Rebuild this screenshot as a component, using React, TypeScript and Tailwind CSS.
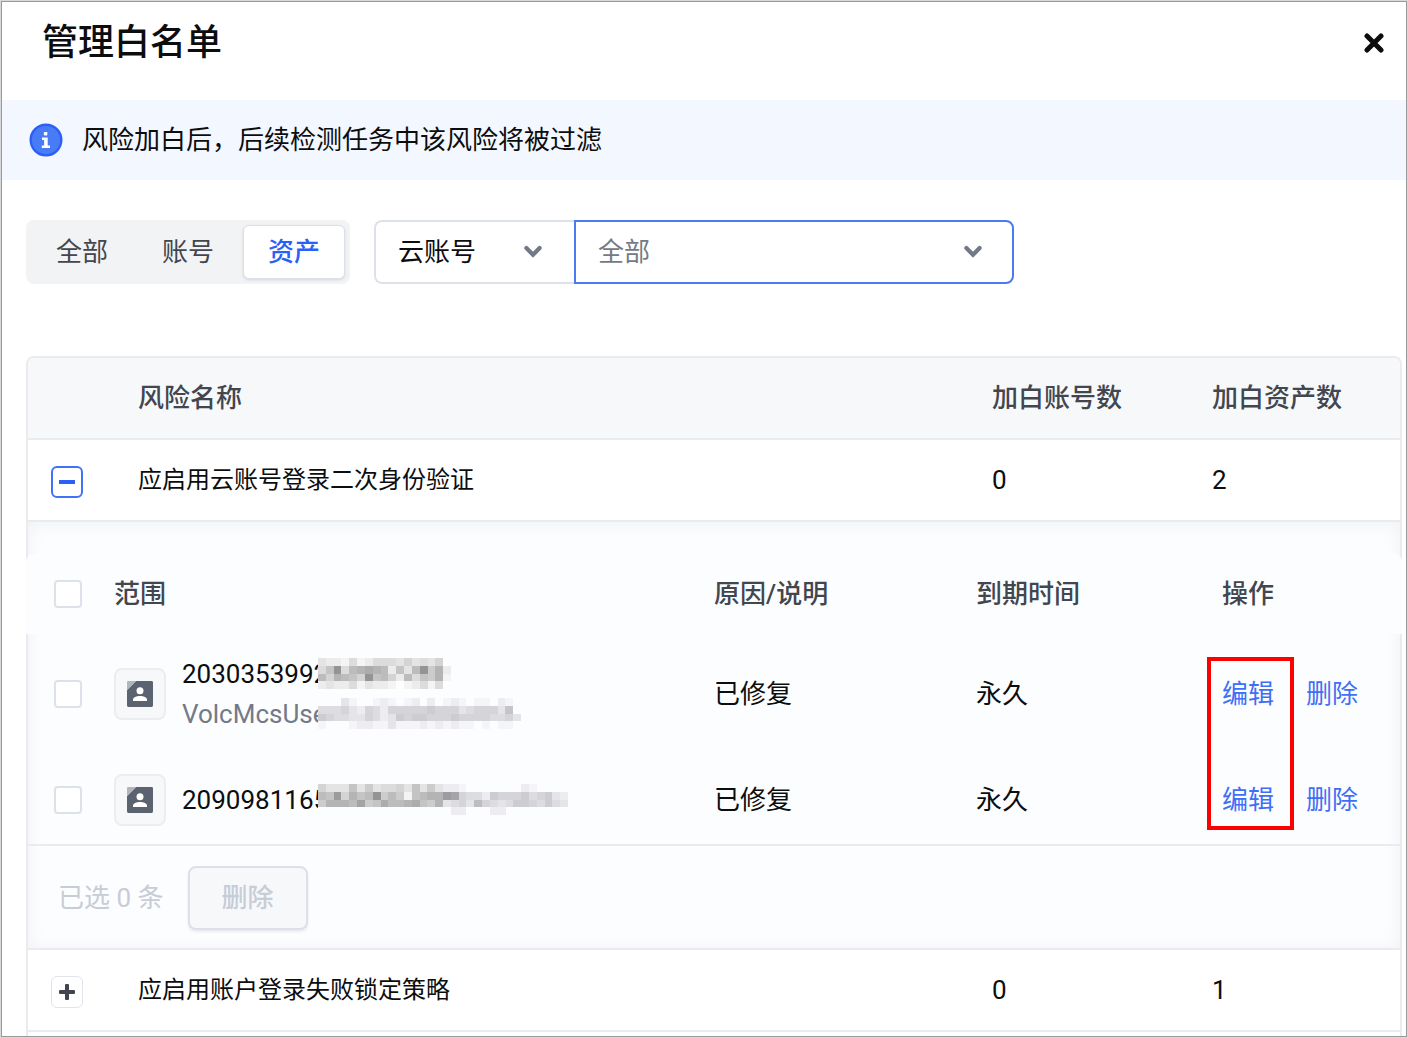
import React, { useState } from "react";

const TABS = ["全部", "账号", "资产"];

// Each character is a shade level (base 16), one string per mosaic row
const assets = [
  {
    id: "2030353992",
    idMask: [
      "32214124443534350",
      "47d489a982738d692",
      "859875d7852847691",
      "23224132210124140",
    ],
    idTint: 99,
    desc: "VolcMcsUser",
    descMask: [
      "00031001210120201210110210",
      "44453254255555655534555370",
      "65443354236566555655554453",
      "10001221131112121211010110",
    ],
  },
  {
    id: "2090981165",
    idMask: [
      "53337363445373632210000000210000",
      "87c5978d68617899cb54426555645632",
      "69998b67a889a7693453854346654643",
      "00000000000000000220002200000000",
    ],
    idTint: 16,
  },
];

const Mosaic = ({ rows, tintFrom }: { rows: string[]; tintFrom: number }) => {
  const cols = rows[0].length;
  return (
    <svg
      className="absolute left-[136px] top-1"
      width={Math.round(cols * 7.8)}
      height={31}
      viewBox={`0 0 ${cols} 4`}
      preserveAspectRatio="none"
      shapeRendering="crispEdges"
      aria-hidden="true"
    >
      {rows.map((row, y) =>
        row.split("").map((c, x) => {
          const v = 252 - parseInt(c, 16) * 8;
          const b = x >= tintFrom ? Math.min(v + 5, 255) : v;
          return (
            <rect
              key={`${x}-${y}`}
              x={x}
              y={y}
              width={1}
              height={1}
              fill={c === "0" ? "#fcfdff" : `rgb(${v},${v},${b})`}
            />
          );
        })
      )}
    </svg>
  );
};

const Chevron = () => (
  <svg
    className="absolute right-8 top-6 pointer-events-none"
    width="18"
    height="14"
    viewBox="0 0 18 14"
    fill="none"
    aria-hidden="true"
  >
    <path
      d="M2.4 4L9 10.8L15.6 4"
      stroke="#737a87"
      strokeWidth="4.2"
      strokeLinecap="round"
      strokeLinejoin="miter"
    />
  </svg>
);

const InfoIcon = () => (
  <svg width="34" height="34" viewBox="0 0 34 34" aria-hidden="true">
    <circle cx="17" cy="17" r="15.3" fill="#4a7bf7" stroke="#2b60f6" strokeWidth="2.4" />
    <rect x="14.8" y="9" width="3.6" height="3.4" rx="0.8" fill="#fff" />
    <path d="M13 14.6H18.7V22.6H21V25H12.8V22.6H15.1V17H13Z" fill="#fff" />
  </svg>
);

const AssetIcon = () => (
  <span className="flex items-center justify-center shrink-0 w-13 h-13 border-2 border-[#ebedf0] bg-[#f7f8fa] rounded-lg">
    <svg width="26" height="26" viewBox="0 0 26 26" aria-hidden="true">
      <path d="M0 1.2A1.2 1.2 0 0 1 1.2 0H9L0 9Z" fill="#b1b5bc" />
      <path
        d="M9.2 0H24.6A1.4 1.4 0 0 1 26 1.4V24.6A1.4 1.4 0 0 1 24.6 26H1.4A1.4 1.4 0 0 1 0 24.6V9.2Z"
        fill="#5c6370"
      />
      <circle cx="13" cy="9.8" r="3.5" fill="#fff" />
      <path d="M6 20V18.6C6 16.2 9.6 15 13 15S20 16.2 20 18.6V20Z" fill="#fff" />
    </svg>
  </span>
);

const ExpandButton = ({
  open,
  label,
  onClick,
}: {
  open: boolean;
  label: string;
  onClick: () => void;
}) => (
  <button
    onClick={onClick}
    aria-expanded={open}
    aria-label={label}
    className={`flex items-center justify-center w-8 h-8 mt-1 bg-white rounded-md ${
      open ? "border-2 border-[#3f72f8]" : "border border-[#e1e4ea]"
    }`}
  >
    <svg width="16" height="16" viewBox="0 0 16 16" aria-hidden="true">
      <rect y="6" width="16" height="4" rx={open ? 0 : 1} fill={open ? "#2b60f6" : "#42464e"} />
      {!open && <rect x="6" width="4" height="16" rx="1" fill="#42464e" />}
    </svg>
  </button>
);

const Checkbox = ({ label }: { label: string }) => (
  <input
    type="checkbox"
    aria-label={label}
    className="block appearance-none w-7 h-7 border-2 border-[#dde1e9] bg-white rounded checked:bg-[#2b60f6]"
  />
);

const WhitelistDetail = () => (
  <div className="bg-[#fcfdff] pt-8 shadow-[inset_0_2px_18px_rgba(0,0,0,0.05)]">
    <div className="-mx-0.5">
      <table className="w-full table-fixed border-separate border-spacing-0 text-left">
        <colgroup>
          <col className="w-16" />
          <col />
          <col className="w-[262px]" />
          <col className="w-[246px]" />
          <col className="w-[204px]" />
        </colgroup>
        <thead>
          <tr className="h-20 text-[#42464e]">
            <th className="pl-7 bg-[#fcfdff] rounded-tl-lg">
              <Checkbox label="全选" />
            </th>
            <th className="px-6 font-medium bg-[#fcfdff]">范围</th>
            <th className="px-6 font-medium bg-[#fcfdff]">原因/说明</th>
            <th className="px-6 font-medium bg-[#fcfdff]">到期时间</th>
            <th className="px-6 font-medium bg-[#fcfdff] rounded-tr-lg">操作</th>
          </tr>
        </thead>
        <tbody>
          {assets.map((asset, i) => (
            <tr key={asset.id} className={asset.desc ? "h-[120px]" : "h-[92px]"}>
              <td className="pl-7">
                <Checkbox label={asset.id} />
              </td>
              <td className="px-6">
                <div className="flex items-center gap-4">
                  <AssetIcon />
                  <div>
                    <div className="relative leading-10">
                      {asset.id}
                      <Mosaic rows={asset.idMask} tintFrom={asset.idTint} />
                    </div>
                    {asset.desc && (
                      <div className="relative leading-10 text-[#737a87]">
                        {asset.desc}
                        <Mosaic rows={asset.descMask} tintFrom={0} />
                      </div>
                    )}
                  </div>
                </div>
              </td>
              <td className="px-6">已修复</td>
              <td className="px-6">永久</td>
              <td className="px-6 relative">
                <div className="flex gap-8 text-[#3f6ff7]">
                  <a href="#edit">编辑</a>
                  <a href="#delete">删除</a>
                </div>
                {/* Highlight around the edit links */}
                {i === 0 && (
                  <div className="absolute left-[9px] top-[23px] w-[87px] h-[173px] border-4 border-[#ff0000] pointer-events-none"></div>
                )}
              </td>
            </tr>
          ))}
        </tbody>
      </table>
    </div>
    {/* Batch actions */}
    <div className="flex items-center gap-6 -mt-0.5 pl-[30px] pt-5 pb-[18px] border-t-2 border-[#eaebef] text-[#c7ccd6]">
      <span>已选 0 条</span>
      <button
        disabled
        className="w-30 h-16 font-medium border-2 border-[#dde0ea] bg-[#f7f8fa] rounded-lg shadow-[0_2px_3px_rgba(0,0,0,0.08)]"
      >
        删除
      </button>
    </div>
  </div>
);

const risks = [
  { name: "应启用云账号登录二次身份验证", accounts: 0, assets: 2 },
  { name: "应启用账户登录失败锁定策略", accounts: 0, assets: 1 },
];

const App = () => {
  const [tab, setTab] = useState("资产");
  const [openRow, setOpenRow] = useState(0);

  return (
    <div
      lang="zh-CN"
      className="min-h-screen flex flex-col p-px bg-[#d9d9d9] font-['Roboto','Noto_Sans_CJK_SC',sans-serif] text-[26px] leading-10 text-[#0c0d0e]"
    >
      <div className="flex-1 flex flex-col border border-[#999999] bg-white">
        <header className="flex items-center justify-between h-[98px] pb-4 pl-10 pr-[22px]">
          <h1 className="text-[36px] leading-12 font-medium">管理白名单</h1>
          <button aria-label="关闭">
            <svg width="20" height="20" viewBox="0 0 20 20" className="block" aria-hidden="true">
              <path
                d="M3 3L17 17M17 3L3 17"
                stroke="#0c0d0e"
                strokeWidth="5"
                strokeLinecap="round"
              />
            </svg>
          </button>
        </header>

        <div className="flex items-center gap-[19px] h-20 pl-[27px] bg-[#f3f7ff]">
          <InfoIcon />
          <p>风险加白后，后续检测任务中该风险将被过滤</p>
        </div>

        {/* Filters */}
        <div className="flex items-center gap-6 pt-10 pl-6">
          <div className="flex gap-1 h-16 p-[5px] bg-[#f2f3f5] rounded-lg">
            {TABS.map((t) => (
              <button
                key={t}
                onClick={() => setTab(t)}
                className={`w-[102px] rounded-md ${
                  tab === t
                    ? "bg-white text-[#2b60f6] font-medium border border-[#dde0e8] shadow-[0_1px_3px_rgba(0,0,0,0.12)]"
                    : "text-[#42464e]"
                }`}
              >
                {t}
              </button>
            ))}
          </div>
          <div className="flex">
            <div className="relative">
              <select
                aria-label="筛选类型"
                className="block appearance-none w-[200px] h-16 pl-[22px] bg-white border-2 border-r-0 border-[#dde2e9] rounded-l-lg"
              >
                <option>云账号</option>
              </select>
              <Chevron />
            </div>
            <div className="relative">
              <select
                aria-label="筛选范围"
                className="block appearance-none w-[440px] h-16 pl-[22px] bg-white text-[#737a87] border-2 border-[#4a7bf0] rounded-r-lg"
              >
                <option>全部</option>
              </select>
              <Chevron />
            </div>
          </div>
        </div>

        {/* Risk table */}
        <div className="flex-1 mt-[72px] ml-6 mr-1 border-2 border-b-0 border-[#eaebef] rounded-t-lg">
          <table className="w-full table-fixed border-separate border-spacing-0 text-left">
            <colgroup>
              <col className="w-[86px]" />
              <col />
              <col className="w-[220px]" />
              <col className="w-[212px]" />
            </colgroup>
            <thead>
              <tr className="h-[82px] text-[#42464e]">
                <th className="bg-[#f7f8fa] border-b-2 border-[#eaebef] rounded-tl-md"></th>
                <th className="px-6 font-medium bg-[#f7f8fa] border-b-2 border-[#eaebef]">
                  风险名称
                </th>
                <th className="px-6 font-medium bg-[#f7f8fa] border-b-2 border-[#eaebef]">
                  加白账号数
                </th>
                <th className="px-6 font-medium bg-[#f7f8fa] border-b-2 border-[#eaebef] rounded-tr-md">
                  加白资产数
                </th>
              </tr>
            </thead>
            <tbody>
              {risks.map((risk, i) => (
                <React.Fragment key={risk.name}>
                  <tr className="h-[82px]">
                    <td className="pl-[23px] border-b-2 border-[#eaebef]">
                      <ExpandButton
                        open={openRow === i}
                        label={risk.name}
                        onClick={() => setOpenRow(openRow === i ? -1 : i)}
                      />
                    </td>
                    <td className="px-6 text-2xl border-b-2 border-[#eaebef]">{risk.name}</td>
                    <td className="px-6 border-b-2 border-[#eaebef]">{risk.accounts}</td>
                    <td className="px-6 border-b-2 border-[#eaebef]">{risk.assets}</td>
                  </tr>
                  {openRow === i && (
                    <tr>
                      <td colSpan={4} className="border-b-2 border-[#eaebef]">
                        <WhitelistDetail />
                      </td>
                    </tr>
                  )}
                </React.Fragment>
              ))}
            </tbody>
          </table>
        </div>
      </div>
    </div>
  );
};

export default App;
